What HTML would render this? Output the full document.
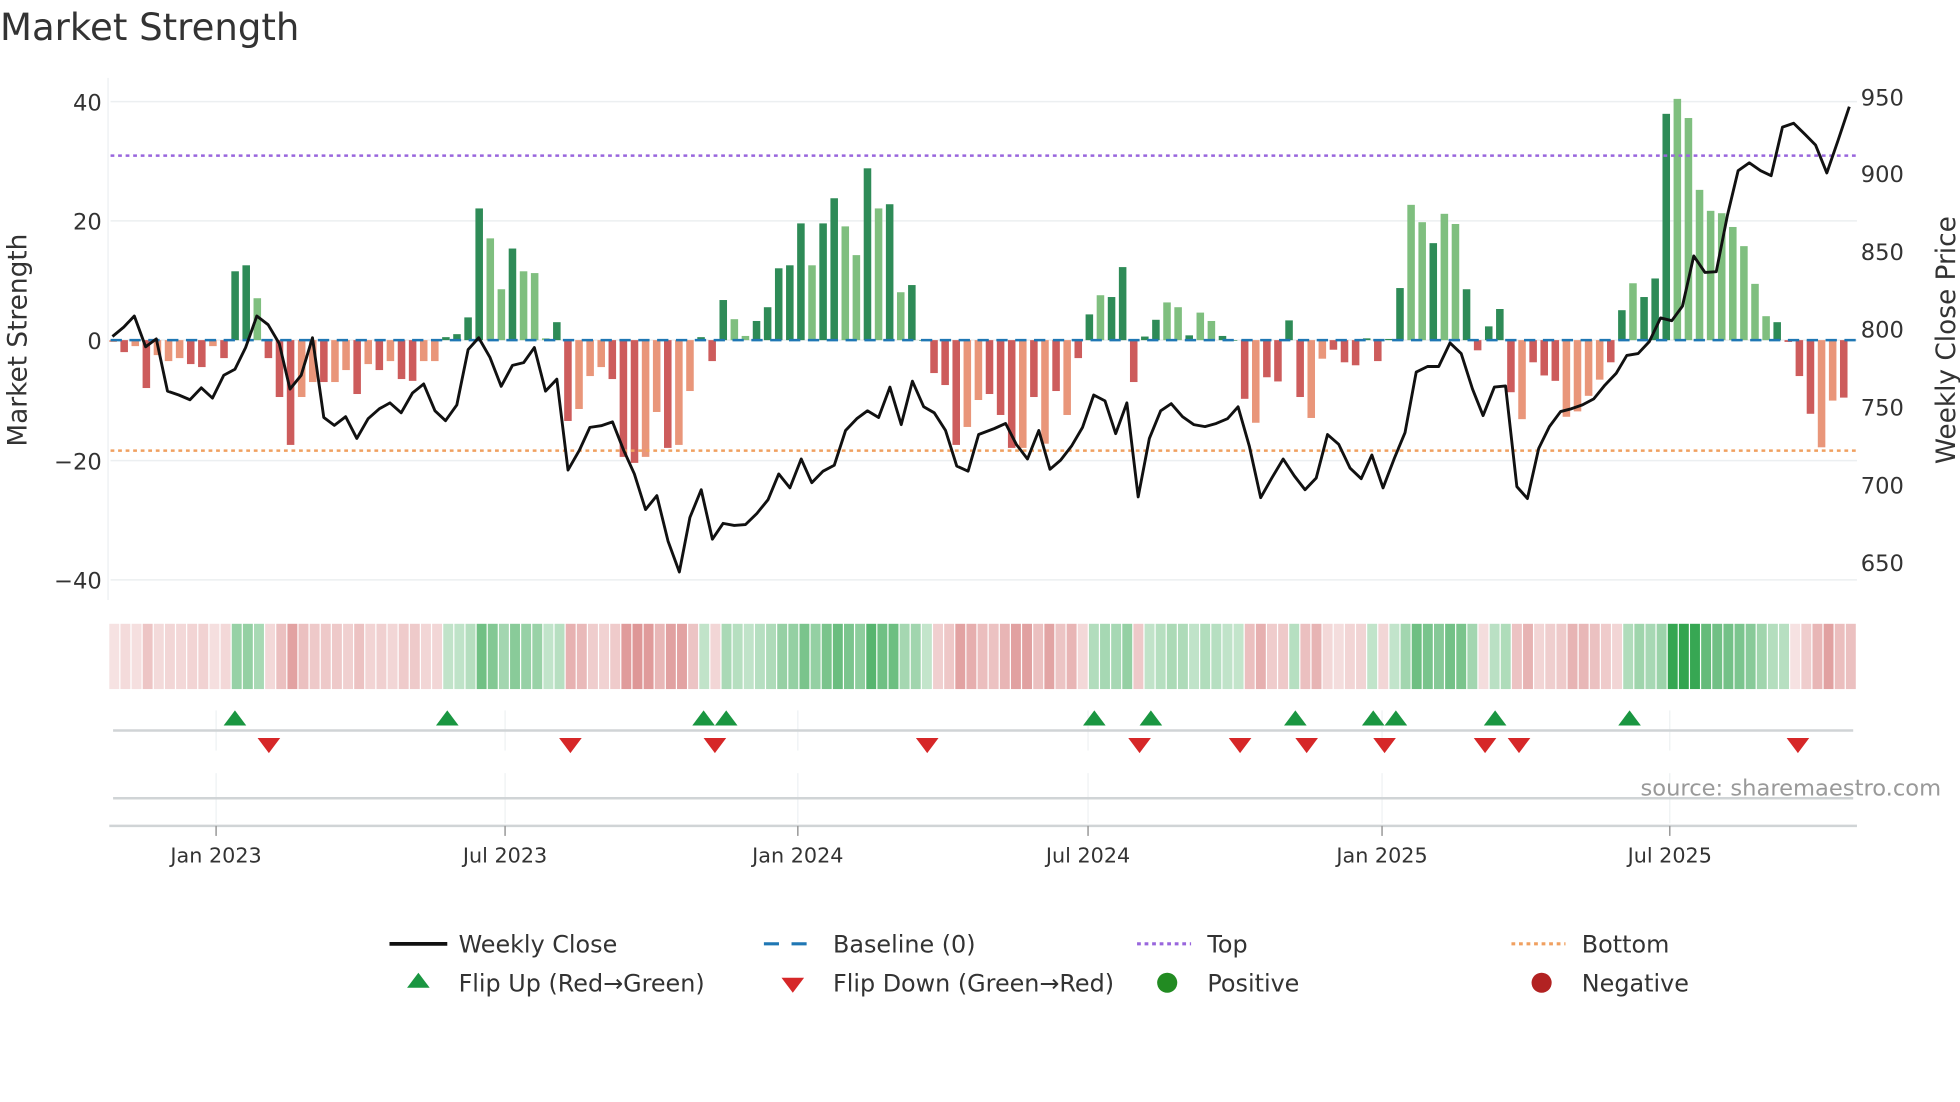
<!DOCTYPE html>
<html><head><meta charset="utf-8">
<style>
html,body{margin:0;padding:0;background:#fff;}
svg{display:block;}
text{font-family:"DejaVu Sans","Liberation Sans",sans-serif;fill:#333;}
</style></head>
<body>
<svg id="s" xmlns="http://www.w3.org/2000/svg" width="1960" height="1102" viewBox="0 0 1560 878" preserveAspectRatio="none">
<rect width="1560" height="878" fill="#fff"/>
<text x="0" y="32" font-size="29.5">Market Strength</text>
<line x1="86" y1="62" x2="86" y2="478" stroke="#eceff1" stroke-width="1"/>
<g stroke="#eceff1" stroke-width="1.2">
<line x1="88" y1="81" x2="1478" y2="81"/>
<line x1="88" y1="176" x2="1478" y2="176"/>
<line x1="88" y1="271" x2="1478" y2="271"/>
<line x1="88" y1="367" x2="1478" y2="367"/>
<line x1="88" y1="462" x2="1478" y2="462"/>
</g>
<g font-size="18" text-anchor="end">
<text x="81" y="88">40</text>
<text x="81" y="183">20</text>
<text x="81" y="278">0</text>
<text x="81" y="374">−20</text>
<text x="81" y="469">−40</text>
</g>
<g font-size="18">
<text x="1481" y="84">950</text>
<text x="1481" y="145">900</text>
<text x="1481" y="207">850</text>
<text x="1481" y="269">800</text>
<text x="1481" y="331">750</text>
<text x="1481" y="393">700</text>
<text x="1481" y="455">650</text>
</g>
<text transform="translate(21,271) rotate(-90)" font-size="21" text-anchor="middle">Market Strength</text>
<text transform="translate(1556,271) rotate(-90)" font-size="21" text-anchor="middle">Weekly Close Price</text>
<g id="bars"></g>
<line x1="88" y1="271" x2="1478" y2="271" stroke="#1f77b4" stroke-width="2" stroke-dasharray="9,6"/>
<line x1="88" y1="124" x2="1478" y2="124" stroke="#9966dd" stroke-width="2" stroke-dasharray="3,3"/>
<line x1="88" y1="359" x2="1478" y2="359" stroke="#f0a060" stroke-width="2" stroke-dasharray="3,3"/>
<polyline id="price" fill="none" stroke="#111" stroke-width="2.3" stroke-linejoin="round"/>
<g id="heat"></g>
<g stroke="#eef1f3" stroke-width="1">
<line x1="172" y1="566" x2="172" y2="598"/><line x1="402" y1="566" x2="402" y2="598"/><line x1="635" y1="566" x2="635" y2="598"/><line x1="866" y1="566" x2="866" y2="598"/><line x1="1100" y1="566" x2="1100" y2="598"/><line x1="1329" y1="566" x2="1329" y2="598"/>
<line x1="172" y1="616" x2="172" y2="656"/><line x1="402" y1="616" x2="402" y2="656"/><line x1="635" y1="616" x2="635" y2="656"/><line x1="866" y1="616" x2="866" y2="656"/><line x1="1100" y1="616" x2="1100" y2="656"/><line x1="1329" y1="616" x2="1329" y2="656"/>
</g>
<line x1="90" y1="582" x2="1475" y2="582" stroke="#d0d4d6" stroke-width="2"/>
<line x1="90" y1="636" x2="1475" y2="636" stroke="#d0d4d6" stroke-width="2"/>
<line x1="87" y1="658" x2="1478" y2="658" stroke="#d0d4d6" stroke-width="2"/>
<g stroke="#999" stroke-width="1.2">
<line x1="172" y1="658" x2="172" y2="666"/><line x1="402" y1="658" x2="402" y2="666"/><line x1="635" y1="658" x2="635" y2="666"/><line x1="866" y1="658" x2="866" y2="666"/><line x1="1100" y1="658" x2="1100" y2="666"/><line x1="1329" y1="658" x2="1329" y2="666"/>
</g>
<g id="mk"></g>
<text x="1545" y="634" font-size="18" text-anchor="end" style="fill:#999">source: sharemaestro.com</text>
<g font-size="16.5" text-anchor="middle">
<text x="172" y="687">Jan 2023</text><text x="402" y="687">Jul 2023</text><text x="635" y="687">Jan 2024</text><text x="866" y="687">Jul 2024</text><text x="1100" y="687">Jan 2025</text><text x="1329" y="687">Jul 2025</text>
</g>
<line x1="310" y1="752" x2="356" y2="752" stroke="#111" stroke-width="3"/>
<line x1="608" y1="752" x2="650" y2="752" stroke="#1f77b4" stroke-width="2.5" stroke-dasharray="12,10"/>
<line x1="905" y1="752" x2="948" y2="752" stroke="#9966dd" stroke-width="2.5" stroke-dasharray="3,3"/>
<line x1="1203" y1="752" x2="1246" y2="752" stroke="#f0a060" stroke-width="2.5" stroke-dasharray="3,3"/>
<polygon points="333,775 324,787 342,787" fill="#1a9641"/>
<polygon points="622,779 640,779 631,791" fill="#d62728"/>
<circle cx="929" cy="783" r="8" fill="#228b22"/>
<circle cx="1227" cy="783" r="8" fill="#b22222"/>
<g font-size="19">
<text x="365" y="759">Weekly Close</text>
<text x="663" y="759">Baseline (0)</text>
<text x="961" y="759">Top</text>
<text x="1259" y="759">Bottom</text>
<text x="365" y="790">Flip Up (Red→Green)</text>
<text x="663" y="790">Flip Down (Green→Red)</text>
<text x="961" y="790">Positive</text>
<text x="1259" y="790">Negative</text>
</g>
</svg>
<script>
var NS="http://www.w3.org/2000/svg";
var V=[-0.3,-2,-1,-8,-2.5,-3.5,-3,-4,-4.5,-1,-3,11.5,12.5,7,-3,-9.5,-17.5,-9.5,-7,-7,-7,-5,-9,-4,-5,-3.5,-6.5,-6.8,-3.5,-3.5,0.5,1,3.8,22,17,8.5,15.3,11.5,11.2,0.3,3,-13.5,-11.5,-6,-4.5,-6.5,-19.5,-20.5,-19.5,-12,-18,-17.5,-8.5,0.5,-3.5,6.7,3.5,0.7,3.2,5.5,12,12.5,19.5,12.5,19.5,23.7,19,14.2,28.7,22,22.7,8,9.2,0,-5.5,-7.5,-17.5,-14.5,-10,
-9,-12.5,-18,-18,-9.5,-17.3,-8.5,-12.5,-3,4.3,7.5,7.2,12.2,-7,0.6,3.4,6.3,5.5,0.8,4.6,3.2,0.7,0,-9.8,-13.8,-6.2,-6.9,3.3,-9.5,-13,-3.1,-1.6,-3.7,-4.2,0.3,-3.5,0.2,8.7,22.6,19.7,16.2,21.1,19.4,8.5,-1.7,2.3,5.2,-8.7,-13.2,-3.7,-5.9,-6.8,-12.8,-11.9,-9.3,-6.6,-3.7,5,9.5,7.2,10.3,37.8,40.3,37.1,25.1,21.6,21.2,18.9,15.7,9.4,4,3,-0.3,-6,-12.3,-17.9,-10.1,-9.6];
var C="SRSRSSSRRSRDDLRRRSSRSSRSRSRRSSDDDDLLDLLLDRSSSRRRSSRSSDRDLLDDDDDLDDLLDLDLD"+"SRRRS"+
"SRRRSRSRSDDLDRDDDLLDLLSRRSRDRRSSRRDRDDDLLDLLRDDRRSRRRSSSSDDLDDDLLLLLLLLLRRRRSS";
var col={D:"#2e8b57",L:"#7fbf7f",R:"#cd5c5c",S:"#e9967a"};
var bars=document.getElementById("bars"),heat=document.getElementById("heat");
for(var i=0;i<V.length;i++){
 var v=V[i],x=90+i*8.83,c=C[i]||(v>=0?"D":"R");
 if(v>=0&&(c=="R"||c=="S"))c="D"; if(v<0&&(c=="D"||c=="L"))c="R";
 var h=Math.abs(v)*4.77,r=document.createElementNS(NS,"rect");
 r.setAttribute("x",x-3);r.setAttribute("width",6);
 r.setAttribute("y",v>=0?271-h:271);r.setAttribute("height",Math.max(h,0.5));
 r.setAttribute("fill",col[c]);bars.appendChild(r);
 var hr=document.createElementNS(NS,"rect");
 hr.setAttribute("x",87+i*8.86);hr.setAttribute("width",7.9);hr.setAttribute("y",497);hr.setAttribute("height",52);
 var a;
 if(v>=0){a=Math.min(0.95,0.28+Math.abs(v)/40*0.7);hr.setAttribute("fill","rgba(40,160,70,"+a+")");}
 else{a=Math.min(0.7,0.16+Math.abs(v)/20*0.42);hr.setAttribute("fill","rgba(200,80,80,"+a+")");}
 heat.appendChild(hr);
}
var L1=[180,852,198,828,215,800,233,878,250,858,268,990,286,1000,304,1012,322,982,340,1008,358,950,376,935,393,880,411,800,429,822,447,870,464,985,482,950,500,855,518,1057,535,1077,553,1055,571,1110,589,1060,607,1035,624,1020,642,1045,660,995,678,972,696,1040,713,1065,731,1025,749,885,766,855,784,905,802,978,820,925,838,918,855,880,873,990,891,960,909,1190,927,1140,944,1082,962,1078,980,1068,998,1140,1015,1200,1033,1290,1051,1255,1069,1370,1087,1448,1104,1310,1122,1240,1140,1365,1157,1325,1175,1330,1193,1328,1211,1300,1229,1265,1246,1200,1264,1235,1282,1162,1299,1222,1317,1193,1335,1178,1353,1090,1371,1060,1388,1040,1406,1057,1424,980,1442,1075,1460,965,1478,1030,1495,1045,1513,1090,1531,1180,1549,1193,1566,1100];
var L2=[15,1085,33,1072,50,1125,68,1162,86,1090,104,1188,121,1165,139,1128,156,1082,174,1000,192,1015,209,1098,227,1020,245,1258,263,1110,281,1040,298,1022,316,1055,334,1075,352,1080,370,1072,388,1060,405,1030,423,1130,441,1260,459,1210,477,1162,495,1205,512,1240,530,1210,548,1100,566,1125,584,1185,602,1212,619,1152,637,1235,655,1160,672,1095,690,942,708,928,726,928,744,868,762,895,780,985,797,1052,815,980,833,977,851,1232,868,1262,886,1135,903,1080,921,1042,938,1035,956,1025,974,1010,992,975,1010,945,1027,900,1045,895,1063,865,1081,805,1099,812,1116,775,1134,648,1152,690,1170,688,1188,545,1205,432,1223,412,1241,432,1258,445,1276,322,1294,312,1312,340,1329,367,1347,438,1365,355,1383,270];
var pts=[];
for(var j=0;j<L1.length;j+=2)pts.push((L1[j]*0.4974).toFixed(1)+","+(L1[j+1]*0.3147).toFixed(1));
for(var j=0;j<L2.length;j+=2)pts.push((780+L2[j]*0.4974+4).toFixed(1)+","+(L2[j+1]*0.3147).toFixed(1));
document.getElementById("price").setAttribute("points",pts.join(" "));
var mk=document.getElementById("mk"),ups=[187,356,560,578,871,916,1031,1093,1111,1190,1297],dns=[214,454,569,738,907,987,1040,1102,1182,1209,1431];
ups.forEach(function(x){var p=document.createElementNS(NS,"polygon");p.setAttribute("points",x+",566 "+(x-9)+",578 "+(x+9)+",578");p.setAttribute("fill","#1a9641");mk.appendChild(p);});
dns.forEach(function(x){var p=document.createElementNS(NS,"polygon");p.setAttribute("points",(x-9)+",588 "+(x+9)+",588 "+x+",600");p.setAttribute("fill","#d62728");mk.appendChild(p);});
</script>
</body></html>
